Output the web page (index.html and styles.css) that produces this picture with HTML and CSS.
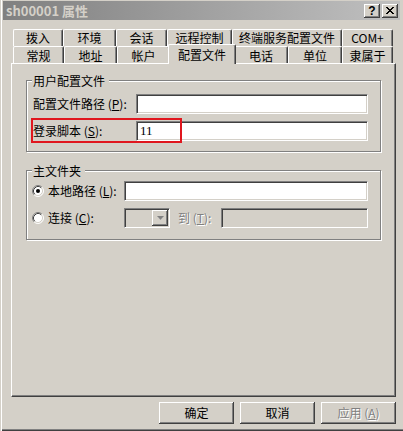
FILE: index.html
```html
<!DOCTYPE html>
<html>
<head>
<meta charset="utf-8">
<title>sh00001 属性</title>
<link rel="stylesheet" href="styles.css">
</head>
<body>
<div class="window">
  <div class="titlebar">
    <span class="title">sh00001 属性</span>
    <div class="caption-btns">
      <span class="cbtn help">?</span>
      <span class="cbtn close"><svg width="8" height="7" viewBox="0 0 8 7"><path d="M0 0h2v1h1v1h2v-1h1v-1h2v1h-1v1h-1v1h-1v1h1v1h1v1h1v1h-2v-1h-1v-1h-2v1h-1v1h-2v-1h1v-1h1v-1h1v-1h-1v-1h-1v-1h-1z" fill="#000"/></svg></span>
    </div>
  </div>

  <div class="tabs">
    <div class="tabrow back">
      <div class="tab w50">拨入</div>
      <div class="tab w53">环境</div>
      <div class="tab w51">会话</div>
      <div class="tab w65">远程控制</div>
      <div class="tab w110">终端服务配置文件</div>
      <div class="tab w51">COM+</div>
    </div>
    <div class="tabrow front">
      <div class="tab w51">常规</div>
      <div class="tab w53">地址</div>
      <div class="tab w53">帐户</div>
      <div class="tab sel">配置文件</div>
      <div class="tab w54">电话</div>
      <div class="tab w54">单位</div>
      <div class="tab w51">隶属于</div>
    </div>
  </div>

  <div class="panel">
    <div class="group g1">
      <span class="legend">用户配置文件</span>
      <div class="row">
        <span class="lbl">配置文件路径 (<u>P</u>):</span>
        <div class="edit w232"></div>
      </div>
      <div class="row">
        <span class="lbl">登录脚本 (<u>S</u>):</span>
        <div class="edit w232">11</div>
      </div>
      <div class="redmark"></div>
    </div>

    <div class="group g2">
      <span class="legend">主文件夹</span>
      <div class="row">
        <span class="opt">
          <svg class="radio" width="12" height="12" viewBox="0 0 12 12">
            <circle cx="6" cy="6" r="5" fill="#fff"/>
            <path d="M2.11 9.89A5.5 5.5 0 0 1 9.89 2.11" fill="none" stroke="#808080"/>
            <path d="M9.89 2.11A5.5 5.5 0 0 1 2.11 9.89" fill="none" stroke="#fff"/>
            <path d="M2.82 9.18A4.5 4.5 0 0 1 9.18 2.82" fill="none" stroke="#404040"/>
            <path d="M9.18 2.82A4.5 4.5 0 0 1 2.82 9.18" fill="none" stroke="#d4d0c8"/>
            <circle cx="6" cy="6" r="2" fill="#000"/>
          </svg>
          <span>本地路径 (<u>L</u>):</span>
        </span>
        <div class="edit w244"></div>
      </div>
      <div class="row">
        <span class="opt">
          <svg class="radio" width="12" height="12" viewBox="0 0 12 12">
            <circle cx="6" cy="6" r="5" fill="#fff"/>
            <path d="M2.11 9.89A5.5 5.5 0 0 1 9.89 2.11" fill="none" stroke="#808080"/>
            <path d="M9.89 2.11A5.5 5.5 0 0 1 2.11 9.89" fill="none" stroke="#fff"/>
            <path d="M2.82 9.18A4.5 4.5 0 0 1 9.18 2.82" fill="none" stroke="#404040"/>
            <path d="M9.18 2.82A4.5 4.5 0 0 1 2.82 9.18" fill="none" stroke="#d4d0c8"/>
          </svg>
          <span>连接 (<u>C</u>):</span>
        </span>
        <div class="combo">
          <span class="drop"><svg width="7" height="5" viewBox="0 0 7 5"><path d="M1 1h5l-2.5 3z" fill="#fff"/><path d="M0 0h7l-3.5 4z" fill="#808080"/></svg></span>
        </div>
        <span class="to dis">到 (<u>T</u>):</span>
        <div class="edit disabled w147"></div>
      </div>
    </div>
  </div>

  <div class="buttons">
    <div class="btn">确定</div>
    <div class="btn">取消</div>
    <div class="btn"><span class="dis">应用 (<u>A</u>)</span></div>
  </div>
</div>
</body>
</html>
```

FILE: styles.css
```css
* { box-sizing: border-box; }
html, body { margin: 0; padding: 0; }
body {
  width: 403px;
  height: 431px;
  overflow: hidden;
  background: #d4d0c8;
  font: 12px/14px "Noto Sans CJK SC", "Noto Sans", sans-serif;
  color: #000;
}
u { text-decoration: underline; text-underline-offset: 1px; }

.window {
  height: 431px;
  padding-top: 1px;
  box-shadow: inset 1px 0 0 #d4d0c8, inset 2px 0 0 #fff, inset 0 -1px 0 #404040, inset 0 -2px 0 #808080;
}

.titlebar {
  margin: 0 3px 0 3px;
  height: 19px;
  background: linear-gradient(to right, #808080, #c0c0c0);
  display: flex;
  justify-content: space-between;
  align-items: flex-start;
}
.title {
  color: #d4d0c8;
  font-weight: bold;
  font-size: 13px;
  line-height: 20px;
  padding-left: 3px;
}
.caption-btns {
  display: flex;
  gap: 2px;
  margin: 3px 2px 0 0;
}
.cbtn {
  width: 16px;
  height: 14px;
  background: #d4d0c8;
  box-shadow: inset -1px -1px 0 #404040, inset 1px 1px 0 #fff, inset -2px -2px 0 #808080;
  display: flex;
  align-items: center;
  justify-content: center;
  font: bold 12px/14px "Liberation Sans", sans-serif;
  padding-bottom: 1px;
}

.tabs {
  margin: 9px 0 0 13px;
  width: 380px;
}
.tabrow {
  display: flex;
  height: 17px;
}
.tab {
  flex-shrink: 0;
  height: 17px;
  background: #d4d0c8;
  border-top: 1px solid #fff;
  border-left: 1px solid #fff;
  border-right: 1px solid #404040;
  box-shadow: inset -1px 0 0 #808080;
  border-radius: 2px 2px 0 0;
  text-align: center;
  padding-top: 2px;
  line-height: 14px;
  white-space: nowrap;
}
.back .tab { padding-top: 1px; }
.w50 { width: 50px; }
.w51 { width: 51px; }
.w53 { width: 53px; }
.w54 { width: 54px; }
.w65 { width: 65px; }
.w110 { width: 110px; }
.tab.sel {
  position: relative;
  z-index: 1;
  width: 68px;
  height: 20px;
  margin: -2px -2px 0 -2px;
  padding-top: 3px;
}

.panel {
  margin-left: 11px;
  width: 385px;
  height: 334px;
  border-top: 1px solid #fff;
  border-left: 1px solid #fff;
  border-right: 1px solid #404040;
  border-bottom: 1px solid #404040;
  box-shadow: inset -1px -1px 0 #808080;
  padding: 16px 0 0 14px;
}

.group {
  position: relative;
  width: 355px;
  border: 1px solid #808080;
  box-shadow: 1px 1px 0 #fff, inset 1px 1px 0 #fff;
  padding-left: 6px;
}
.g1 { height: 72px; padding-top: 13px; }
.g2 { height: 70px; padding-top: 10px; margin-top: 18px; }
.legend {
  position: absolute;
  top: -7px;
  left: 5px;
  padding: 0 4px 0 1px;
  background: #d4d0c8;
  line-height: 14px;
}

.row {
  display: flex;
  align-items: center;
  height: 20px;
}
.row + .row { margin-top: 7px; }
.lbl { width: 103px; white-space: nowrap; }

.edit {
  height: 20px;
  background: #fff;
  border-top: 1px solid #808080;
  border-left: 1px solid #808080;
  border-bottom: 1px solid #fff;
  border-right: 1px solid #fff;
  box-shadow: inset 1px 1px 0 #404040, inset -1px -1px 0 #d4d0c8;
  padding-left: 3px;
  line-height: 18px;
  font-family: "Liberation Serif", serif;
  font-size: 13px;
}
.edit.disabled { background: #d4d0c8; }
.w232 { width: 232px; }
.w244 { width: 244px; }
.w147 { width: 147px; }

.opt {
  width: 91px;
  display: flex;
  align-items: center;
  white-space: nowrap;
}
.radio { margin: 0 4px 0 -1px; flex-shrink: 0; }

.combo {
  width: 46px;
  height: 20px;
  background: #d4d0c8;
  border-top: 1px solid #808080;
  border-left: 1px solid #808080;
  border-bottom: 1px solid #fff;
  border-right: 1px solid #fff;
  box-shadow: inset 1px 1px 0 #404040, inset -1px -1px 0 #d4d0c8;
  padding: 1px;
  display: flex;
  justify-content: flex-end;
}
.drop {
  width: 16px;
  height: 16px;
  background: #d4d0c8;
  box-shadow: inset -1px -1px 0 #404040, inset 1px 1px 0 #fff, inset -2px -2px 0 #808080;
  display: flex;
  align-items: center;
  justify-content: center;
}
.to {
  width: 51px;
  padding-left: 8px;
  white-space: nowrap;
}
.dis { color: #808080; text-shadow: 1px 1px 0 #fff; }

.redmark {
  position: absolute;
  left: 4px;
  top: 37px;
  width: 151px;
  height: 25px;
  border: 2px solid #e0161e;
}

.buttons {
  display: flex;
  justify-content: flex-end;
  gap: 6px;
  padding-right: 7px;
  margin-top: 5px;
}
.btn {
  width: 75px;
  height: 22px;
  background: #d4d0c8;
  box-shadow: inset -1px -1px 0 #404040, inset 1px 1px 0 #fff, inset -2px -2px 0 #808080;
  text-align: center;
  line-height: 21px;
}
```
